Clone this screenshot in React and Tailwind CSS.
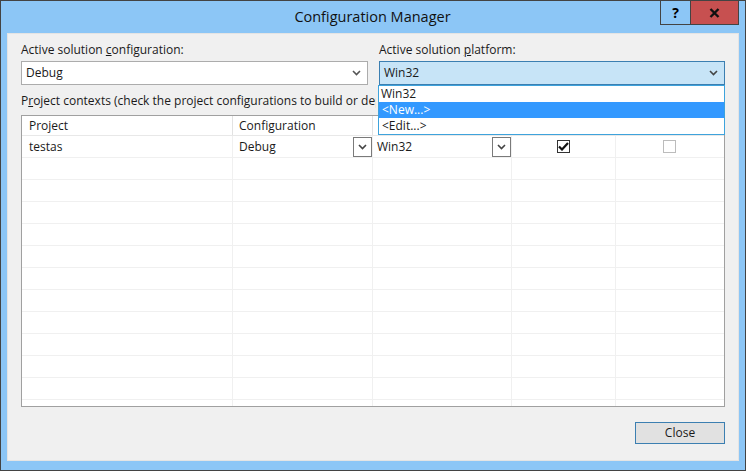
import React from "react";

const font = { fontFamily: '"Open Sans", "Noto Sans", sans-serif' };

function Chevron({ className = "" }) {
    return (
        <svg width="9" height="6" viewBox="0 0 9 6" className={className}>
            <path d="M1 1 L4.5 4.5 L8 1" fill="none" stroke="currentColor" strokeWidth="1.6" />
        </svg>
    );
}

function CellDrop() {
    return (
        <div className="ml-auto self-stretch mt-px w-[19px] border border-[#7a7a7a] bg-white flex items-center justify-center text-[#444]">
            <Chevron />
        </div>
    );
}

function CheckBox({ checked }) {
    return (
        <div className={"w-[13px] h-[13px] bg-white border flex items-center justify-center " + (checked ? "border-[#333]" : "border-[#bcbcbc]")}>
            {checked && (
                <svg width="11" height="9" viewBox="0 0 11 9">
                    <path d="M1 4.5 L4 7.5 L10 1" fill="none" stroke="#111" strokeWidth="2.2" />
                </svg>
            )}
        </div>
    );
}

export default function App() {
    const emptyRows = Array.from({ length: 12 });

    return (
        <div className="w-[751px] h-[474px] bg-white text-[12px] text-[#1a1a1a]" style={font}>
            {/* window */}
            <div className="w-[746px] h-[471px] border border-[#434343] bg-[#8cc6f6] flex flex-col">
                {/* title bar */}
                <div className="h-[32px] flex shrink-0">
                    <div className="w-[84px]" />
                    <div className="flex-1 flex items-center justify-center text-[14.5px] text-[#111] pb-[1px]">
                        Configuration Manager
                    </div>
                    <div className="flex items-start pr-[6px]">
                        <div className="-mt-px h-[25px] w-[31px] border border-[#434343] bg-[#8cc6f6] flex items-center justify-center font-bold text-[14px] text-black">?</div>
                        <div className="-mt-px h-[25px] w-[48px] border border-l-0 border-[#434343] bg-[#c75050] flex items-center justify-center">
                            <svg width="11" height="10" viewBox="0 0 11 10">
                                <path d="M1.5 1 L9.5 9 M9.5 1 L1.5 9" stroke="#111" strokeWidth="2.4" />
                            </svg>
                        </div>
                    </div>
                </div>

                {/* content */}
                <div className="mx-[6px] h-[428px] bg-[#f0f0f0] border border-[#e4e4e4] flex flex-col pl-[13px] pr-[13px] pt-[8px]">
                    <div className="flex gap-[11px]">
                        <div className="w-[347px] flex flex-col">
                            <div className="h-[16px] leading-[16px]">Active solution <span className="underline">c</span>onfiguration:</div>
                            <div className="mt-[3px] h-[24px] bg-white border border-[#acacac] flex items-center pl-[4px] pr-[6px]">
                                <span>Debug</span>
                                <Chevron className="ml-auto text-[#555]" />
                            </div>
                        </div>
                        <div className="flex-1 flex flex-col relative">
                            <div className="h-[16px] leading-[16px]">Active solution <span className="underline">p</span>latform:</div>
                            <div className="mt-[3px] h-[24px] bg-[#c7e4f7] border border-[#3c7fb1] flex items-center pl-[4px] pr-[6px]">
                                <span>Win32</span>
                                <Chevron className="ml-auto text-[#444]" />
                            </div>
                            {/* open dropdown list */}
                            <div className="absolute top-[43px] left-[-1px] right-0 z-10 bg-white border border-[#3ea3dc] flex flex-col">
                                <div className="h-[16px] leading-[16px] pl-[2px]">Win32</div>
                                <div className="h-[16px] leading-[16px] pl-[3px] bg-[#3399ff] text-white">&lt;New...&gt;</div>
                                <div className="h-[16px] leading-[16px] pl-[3px]">&lt;Edit...&gt;</div>
                            </div>
                        </div>
                    </div>

                    {/* label runs under the open list, so clip it there */}
                    <div className="mt-[8px] h-[16px] leading-[16px] w-[355px] overflow-hidden whitespace-nowrap">
                        P<span className="underline">r</span>oject contexts (check the project configurations to build or deploy):
                    </div>

                    {/* grid */}
                    <div className="mt-[6px] flex-1 min-h-0 bg-white border border-[#a0a0a0] overflow-hidden">
                        <div className="grid grid-cols-[211px_140px_139px_104px_1fr] h-[20px] border-b border-[#e8e8e8]">
                            <div className="border-r border-[#e2e2e2] pl-[7px] leading-[19px]">Project</div>
                            <div className="border-r border-[#e2e2e2] pl-[6px] leading-[19px]">Configuration</div>
                            <div className="border-r border-[#e2e2e2]" />
                            <div className="border-r border-[#e2e2e2]" />
                            <div />
                        </div>
                        <div className="grid grid-cols-[211px_140px_139px_104px_1fr] h-[22px] border-b border-[#f0f0f0]">
                            <div className="border-r border-[#f0f0f0] pl-[7px] flex items-center">testas</div>
                            <div className="border-r border-[#f0f0f0] pl-[6px] flex items-center">
                                <span>Debug</span>
                                <CellDrop />
                            </div>
                            <div className="border-r border-[#f0f0f0] pl-[4px] flex items-center">
                                <span>Win32</span>
                                <CellDrop />
                            </div>
                            <div className="border-r border-[#f0f0f0] flex items-center justify-center">
                                <CheckBox checked />
                            </div>
                            <div className="flex items-center justify-center pr-[2px]">
                                <CheckBox />
                            </div>
                        </div>
                        {emptyRows.map((_, i) => (
                            <div key={i} className="grid grid-cols-[211px_140px_139px_104px_1fr] h-[22px] border-b border-[#f0f0f0]">
                                <div className="border-r border-[#f0f0f0]" />
                                <div className="border-r border-[#f0f0f0]" />
                                <div className="border-r border-[#f0f0f0]" />
                                <div className="border-r border-[#f0f0f0]" />
                                <div />
                            </div>
                        ))}
                    </div>

                    <div className="flex justify-end mt-[15px] mb-[16px]">
                        <button className="w-[90px] h-[22px] bg-[#e1e1e1] border border-[#3c7fb1] text-[12px] text-[#1a1a1a] leading-none" style={font}>
                            Close
                        </button>
                    </div>
                </div>
            </div>
        </div>
    );
}
